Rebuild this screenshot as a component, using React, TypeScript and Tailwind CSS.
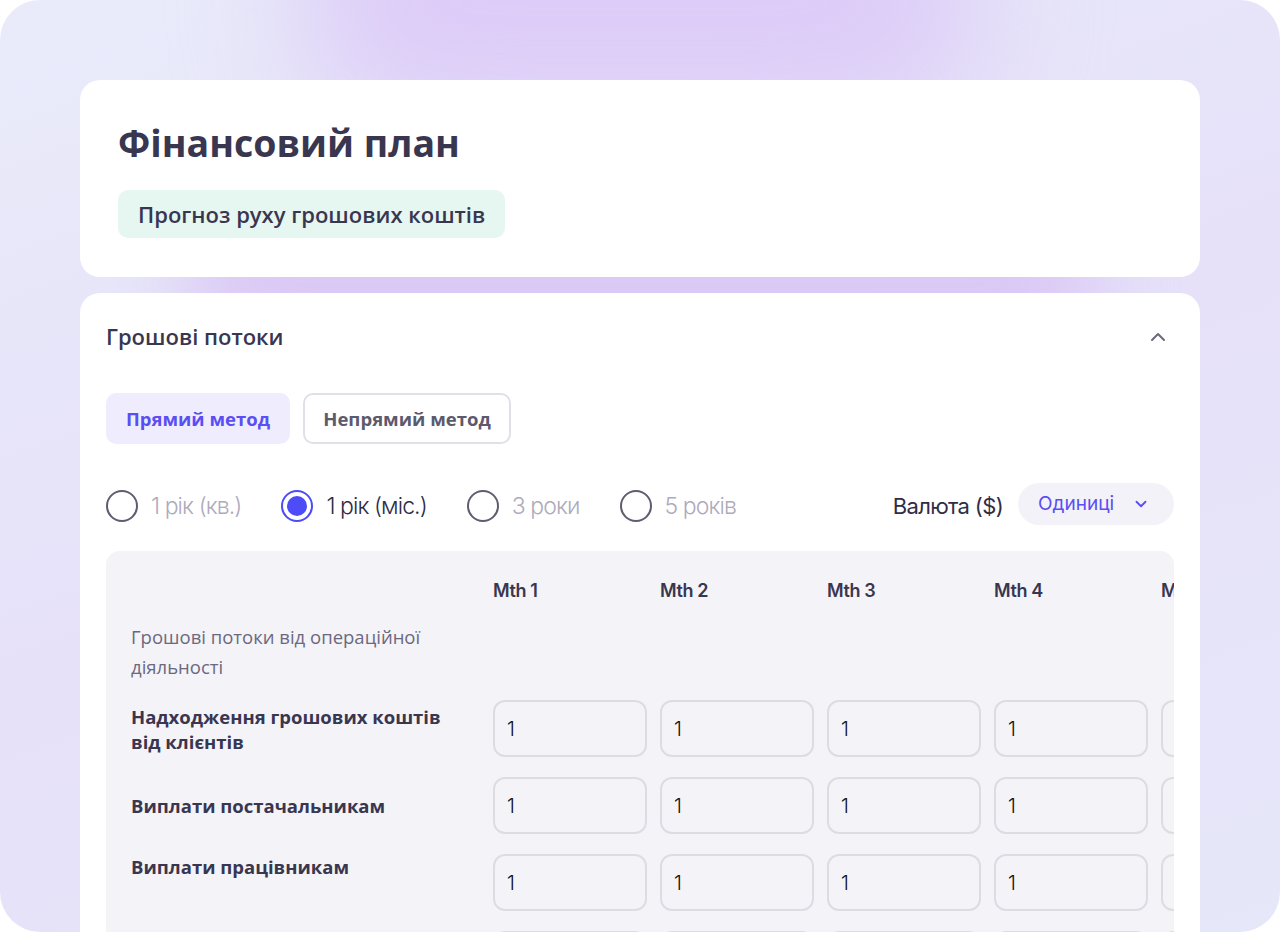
// Financial plan – cash flow forecast card

import React from 'react';
import { ChevronUp, ChevronDown } from 'lucide-react';

const periods = [
  { label: '1 рік (кв.)', active: false },
  { label: '1 рік (міс.)', active: true },
  { label: '3 роки', active: false },
  { label: '5 років', active: false },
];

const months = ['Mth 1', 'Mth 2', 'Mth 3', 'Mth 4', 'Mth 5'];

const rows = [
  { label: 'Надходження грошових коштів від клієнтів', top: false },
  { label: 'Виплати постачальникам', top: false },
  { label: 'Виплати працівникам', top: true },
  { label: '', top: false },
];

const Radio: React.FC<{ label: string; active: boolean }> = ({ label, active }) => (
  <div className="flex items-center gap-[13px]">
    <div
      className={
        active
          ? 'w-[32px] h-[32px] rounded-full border-2 border-[#4d4cf6] flex items-center justify-center'
          : 'w-[32px] h-[32px] rounded-full border-2 border-[#5f5d70]'
      }
    >
      {active && <div className="w-[20px] h-[20px] rounded-full bg-[#4d4cf6]" />}
    </div>
    <span
      className={
        active
          ? 'text-[23px] font-light tracking-[-0.04em] text-[#2f2c45]'
          : 'text-[23px] font-light tracking-[-0.04em] text-[#adabbb]'
      }
    >
      {label}
    </span>
  </div>
);

const Cell: React.FC = () => (
  <div className="w-[154px] h-[57px] shrink-0 rounded-[12px] border-2 border-[#dddce3] bg-[#f4f3f8] flex items-center pl-[12px] text-[20px] text-[#111] font-['Inter',sans-serif] font-light">
    1
  </div>
);

export default function App() {
  return (
    <div className="w-[1280px] h-[932px] bg-white">
      <div className="relative w-full h-full rounded-[40px] overflow-hidden bg-[linear-gradient(160deg,#e9ebfa_0%,#e6e1f9_50%,#e6e7f9_100%)] font-['Open_Sans',sans-serif]">
        {/* purple glow behind the cards */}
        <div className="absolute left-[300px] top-[-120px] w-[680px] h-[240px] rounded-full bg-[#dccbf7] blur-[60px]" />
        <div className="absolute left-[180px] top-[235px] w-[920px] h-[100px] rounded-full bg-[#d8c3f4] blur-[40px]" />

        <div className="relative px-[80px] pt-[80px] flex flex-col gap-[16px]">
          {/* Header card */}
          <div className="bg-white rounded-[20px] px-[38px] pt-[40px] pb-[39px]">
            <h1 className="text-[37.5px] leading-[46px] font-bold text-[#393650]">Фінансовий план</h1>
            <div className="mt-[24px] inline-flex items-center h-[48px] px-[20px] rounded-[10px] bg-[#e6f6f0] text-[22px] font-semibold text-[#393650]">
              Прогноз руху грошових коштів
            </div>
          </div>

          {/* Cash flow card */}
          <div className="bg-white rounded-t-[20px] px-[26px] pt-[29px] h-[700px]">
            <div className="flex items-center justify-between h-[28px]">
              <h2 className="text-[22px] leading-[28px] font-semibold text-[#393650]">Грошові потоки</h2>
              <ChevronUp size={24} strokeWidth={2} className="text-[#6b6a7d] mr-[4px] mt-[2px]" />
            </div>

            <div className="mt-[43px] flex gap-[13px]">
              <button className="w-[184px] h-[51px] rounded-[10px] bg-[#efedfd] text-[18.5px] font-bold text-[#5a4ef4]">
                Прямий метод
              </button>
              <button className="w-[208px] h-[51px] rounded-[10px] border-2 border-[#e1e0e6] bg-white text-[18.5px] font-bold text-[#5c5a6e]">
                Непрямий метод
              </button>
            </div>

            <div className="mt-[39px] flex items-center justify-between font-['Inter',sans-serif]">
              <div className="flex items-center gap-[40px]">
                {periods.map((p) => (
                  <Radio key={p.label} label={p.label} active={p.active} />
                ))}
              </div>
              <div className="flex items-center gap-[15px]">
                <span className="text-[22px] tracking-[-0.03em] text-[#2f2c45]">Валюта ($)</span>
                <div className="mb-[4px] w-[156px] h-[42px] rounded-full bg-[#f3f2f8] flex items-center pl-[20px] pr-[24px] justify-between">
                  <span className="text-[19px] text-[#5a4ef4]">Одиниці</span>
                  <ChevronDown size={18} strokeWidth={2.5} className="text-[#5a4ef4]" />
                </div>
              </div>
            </div>

            {/* Table */}
            <div className="mt-[22px] bg-[#f4f3f8] rounded-[14px] overflow-hidden pl-[25px] pt-[28px] h-[420px]">
              <div className="flex">
                <div className="w-[362px] shrink-0" />
                <div className="flex gap-[13px]">
                  {months.map((m) => (
                    <div key={m} className="w-[154px] shrink-0 text-[18px] leading-[24px] font-semibold tracking-[-0.02em] text-[#393650] font-['Inter',sans-serif]">
                      {m}
                    </div>
                  ))}
                </div>
              </div>

              <div className="mt-[19px] w-[310px] text-[18.5px] leading-[30px] text-[#6b6980]">
                Грошові потоки від операційної діяльності
              </div>

              <div className="mt-[18px] flex flex-col gap-[20px]">
                {rows.map((r, i) => (
                  <div key={i} className="flex items-center">
                    <div
                      className={
                        r.top
                          ? 'w-[362px] shrink-0 self-start text-[18.5px] leading-[25px] font-bold text-[#393650] pr-[20px]'
                          : 'w-[362px] shrink-0 text-[18.5px] leading-[25px] font-bold text-[#393650] pr-[30px]'
                      }
                    >
                      {r.label}
                    </div>
                    <div className="flex gap-[13px]">
                      {months.map((m) => (
                        <Cell key={m} />
                      ))}
                    </div>
                  </div>
                ))}
              </div>
            </div>
          </div>
        </div>
      </div>
    </div>
  );
}
